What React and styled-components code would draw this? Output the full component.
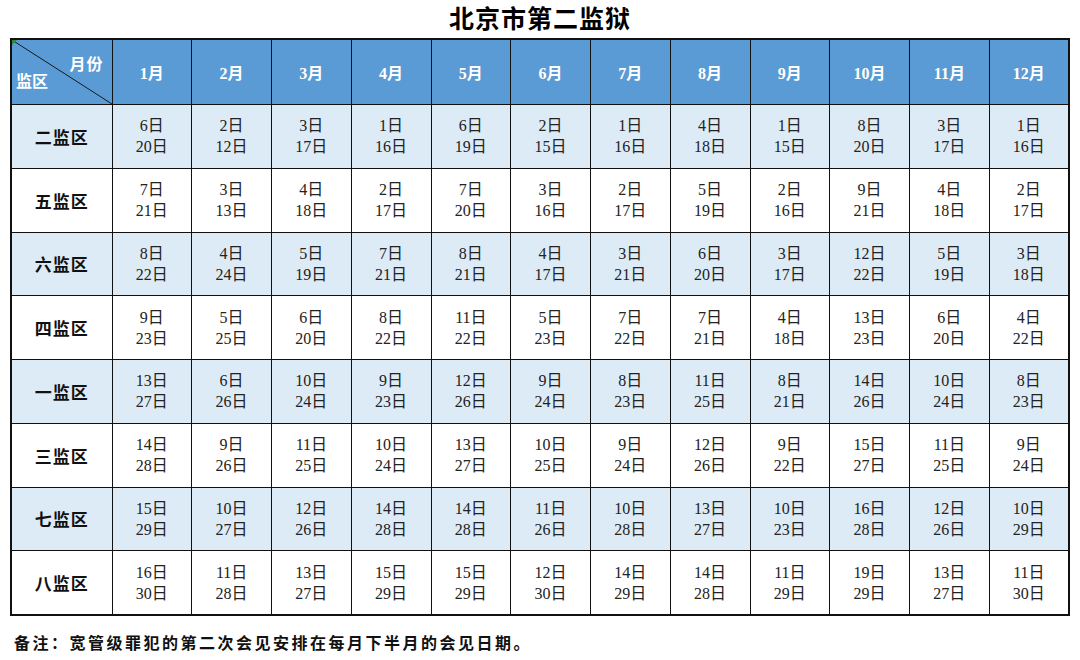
import React from "react";
import styled, { createGlobalStyle } from "styled-components";

const GlobalStyle = createGlobalStyle`
  html, body {
    margin: 0;
    padding: 0;
    background: #fff;
  }
  body {
    font-family: "Liberation Serif", "Noto Sans CJK SC", serif;
    color: #111;
  }
`;

const months = ["1月", "2月", "3月", "4月", "5月", "6月", "7月", "8月", "9月", "10月", "11月", "12月"];

const rows = [
  ["二监区", [[6, 20], [2, 12], [3, 17], [1, 16], [6, 19], [2, 15], [1, 16], [4, 18], [1, 15], [8, 20], [3, 17], [1, 16]]],
  ["五监区", [[7, 21], [3, 13], [4, 18], [2, 17], [7, 20], [3, 16], [2, 17], [5, 19], [2, 16], [9, 21], [4, 18], [2, 17]]],
  ["六监区", [[8, 22], [4, 24], [5, 19], [7, 21], [8, 21], [4, 17], [3, 21], [6, 20], [3, 17], [12, 22], [5, 19], [3, 18]]],
  ["四监区", [[9, 23], [5, 25], [6, 20], [8, 22], [11, 22], [5, 23], [7, 22], [7, 21], [4, 18], [13, 23], [6, 20], [4, 22]]],
  ["一监区", [[13, 27], [6, 26], [10, 24], [9, 23], [12, 26], [9, 24], [8, 23], [11, 25], [8, 21], [14, 26], [10, 24], [8, 23]]],
  ["三监区", [[14, 28], [9, 26], [11, 25], [10, 24], [13, 27], [10, 25], [9, 24], [12, 26], [9, 22], [15, 27], [11, 25], [9, 24]]],
  ["七监区", [[15, 29], [10, 27], [12, 26], [14, 28], [14, 28], [11, 26], [10, 28], [13, 27], [10, 23], [16, 28], [12, 26], [10, 29]]],
  ["八监区", [[16, 30], [11, 28], [13, 27], [15, 29], [15, 29], [12, 30], [14, 29], [14, 28], [11, 29], [19, 29], [13, 27], [11, 30]]],
];

const App = () => {
  return (
    <Page>
      <GlobalStyle />
      <Title>北京市第二监狱</Title>
      <Table>
        <colgroup>
          <col style={{ width: 101 }} />
          {months.map((m) => (
            <col key={m} />
          ))}
        </colgroup>
        <thead>
          <tr>
            <Corner>
              <CornerTop>月份</CornerTop>
              <CornerBottom>监区</CornerBottom>
            </Corner>
            {months.map((m) => (
              <HeadCell key={m}>{m}</HeadCell>
            ))}
          </tr>
        </thead>
        <tbody>
          {rows.map(([name, dates], i) => (
            <Row key={name} $shaded={i % 2 === 0}>
              <RowLabel>{name}</RowLabel>
              {dates.map(([a, b], j) => (
                <DateCell key={j}>
                  {a}日
                  <br />
                  {b}日
                </DateCell>
              ))}
            </Row>
          ))}
        </tbody>
      </Table>
      <Note>备注：宽管级罪犯的第二次会见安排在每月下半月的会见日期。</Note>
    </Page>
  );
};

export default App;

const Page = styled.div`
  width: 1080px;
  padding: 0 10px;
  box-sizing: border-box;
`;

const Title = styled.h1`
  margin: 0;
  height: 38px;
  line-height: 40px;
  text-align: center;
  font-size: 25px;
  font-weight: 700;
  letter-spacing: 1px;
  color: #000;
`;

const Table = styled.table`
  width: 1060px;
  table-layout: fixed;
  border-collapse: collapse;
  border: 2px solid #111;
`;

const HeadCell = styled.th`
  height: 64px;
  padding: 0;
  background: #5b9bd5;
  color: #fff;
  border: 1px solid #111;
  font-size: 16px;
  font-weight: 700;
  text-align: center;
  vertical-align: middle;
`;

const Corner = styled(HeadCell)`
  position: relative;
  background:
    linear-gradient(
      to top right,
      transparent calc(50% - 0.8px),
      #111 50%,
      transparent calc(50% + 0.8px)
    ),
    #5b9bd5;

  &::before {
    content: "";
    position: absolute;
    top: 0;
    left: 0;
    border-top: 5px solid #2e8b2e;
    border-right: 5px solid transparent;
  }
`;

const CornerTop = styled.span`
  position: absolute;
  top: 11px;
  right: 8px;
  letter-spacing: 1px;
`;

const CornerBottom = styled.span`
  position: absolute;
  bottom: 12px;
  left: 4px;
`;

const Row = styled.tr`
  background: ${(p) => (p.$shaded ? "#ddebf7" : "#fff")};
`;

const RowLabel = styled.td`
  height: 62.75px;
  padding: 0;
  border: 1px solid #111;
  text-align: center;
  vertical-align: middle;
  font-size: 17px;
  font-weight: 700;
  letter-spacing: 1px;
`;

const DateCell = styled.td`
  padding: 0;
  border: 1px solid #111;
  text-align: center;
  vertical-align: middle;
  font-size: 16px;
  line-height: 21px;
  color: #222;
`;

const Note = styled.p`
  margin: 14px 0 0 4px;
  font-size: 16px;
  font-weight: 700;
  letter-spacing: 2.5px;
  color: #111;
`;
